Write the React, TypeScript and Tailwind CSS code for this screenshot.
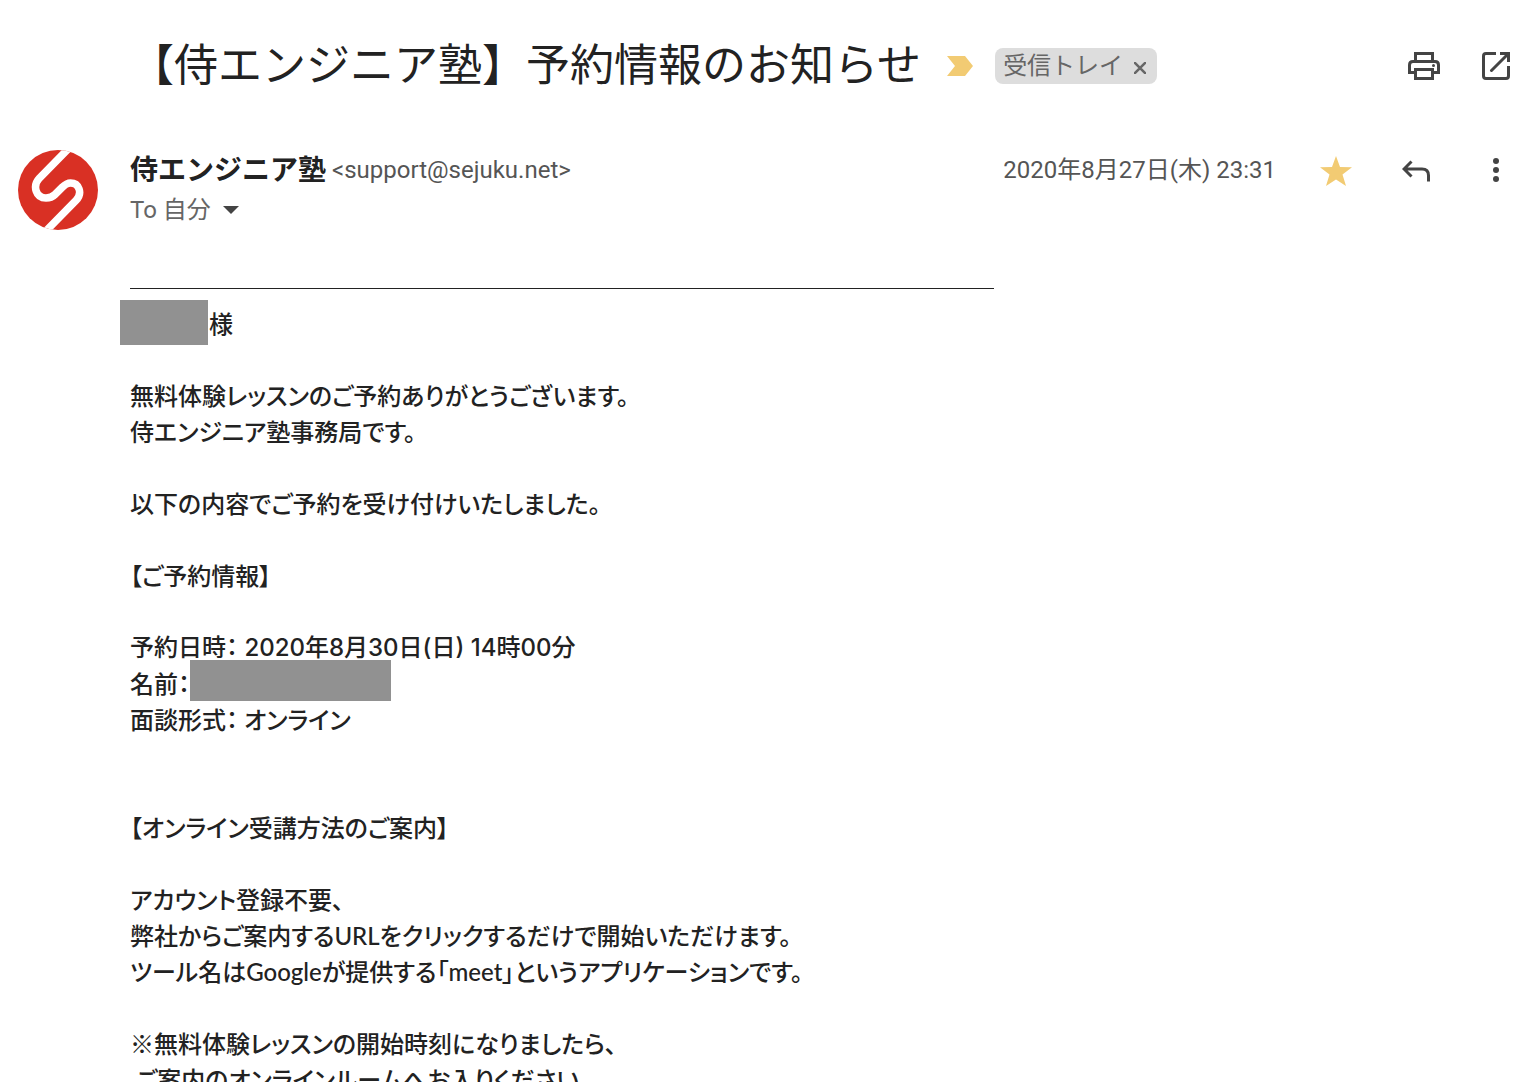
import type { ReactNode } from "react";

const iconButton = "flex size-10 shrink-0 items-center justify-center text-[#444444]";

function Redacted({ className }: { className: string }) {
  return <span aria-hidden="true" className={`shrink-0 bg-[#919191] ${className}`} />;
}

const Logo = () => (
  <svg viewBox="0 0 80 80" className="size-20 shrink-0" role="img" aria-label="侍エンジニア塾">
    <clipPath id="disc">
      <circle cx="40" cy="40" r="40" />
    </clipPath>
    <g clipPath="url(#disc)">
      <rect width="80" height="80" fill="#d93024" />
      <path
        d="M54 -5 L21.500 28 C14 36 18 48 28 48 C32 48 34.500 47 37 44.500 L44 37.500 C46.500 35 49 33 52.500 33 C61 33 65 43 58 50.500 L25 84"
        fill="none"
        stroke="#fff"
        strokeWidth="7.500"
      />
    </g>
  </svg>
);

const PrintIcon = () => (
  <svg viewBox="0 0 32 28" className="h-7 w-8" fill="none" stroke="currentColor" strokeWidth="3">
    <path d="M7.500 9V1.500h17V9M7 20.500H1.500V13q0-3.500 3.500-3.500h22q3.500 0 3.500 3.500v7.500H25" />
    <path d="M7.500 17.500h17v9h-17z" />
    <circle cx="25.500" cy="13.500" r="1.500" fill="currentColor" stroke="none" />
  </svg>
);

const OpenIcon = () => (
  <svg viewBox="0 0 28 28" className="size-7" fill="none" stroke="currentColor" strokeWidth="3">
    <path d="M14 1.500H4Q1.500 1.500 1.500 4v20q0 2.500 2.500 2.500h20q2.500 0 2.500-2.500V14M18 1.500h8.500V10" />
    <path d="M26 2 9.500 18.500" strokeLinecap="round" />
  </svg>
);

const StarIcon = () => (
  <svg viewBox="0 0 32 30" className="mt-[2px] h-[30px] w-8" fill="#f2cb73">
    <path d="M16 0l4 10.900 12 .4-9.500 7.100L26 30l-10-6.500L6 30l3.500-11.600L0 11.300l12-.4z" />
  </svg>
);

const ReplyIcon = () => (
  <svg viewBox="0 0 28 22" className="mt-[2px] h-[22px] w-7" fill="none" stroke="currentColor" strokeWidth="3">
    <path d="M9.500 1.500 2 9l7.500 7.500M2 9h18q6.500 0 6.500 6.500V21.500" />
  </svg>
);

const MoreIcon = () => (
  <svg viewBox="0 0 6 24" className="h-6 w-[6px]" fill="currentColor">
    <circle cx="3" cy="3" r="3" />
    <circle cx="3" cy="12" r="3" />
    <circle cx="3" cy="21" r="3" />
  </svg>
);

const lines: ReactNode[] = [
  <>
    <Redacted className="-mt-[6px] -ml-[10px] mr-px h-[45px] w-[88px]" />様
  </>,
  "",
  "無料体験レッスンのご予約ありがとうございます。",
  "侍エンジニア塾事務局です。",
  "",
  "以下の内容でご予約を受け付けいたしました。",
  "",
  "【ご予約情報】",
  "",
  <span className="font-[Inter,'Noto_Sans_CJK_JP',sans-serif]">予約日時： 2020年8月30日(日) 14時00分</span>,
  <>
    名前：
    <Redacted className="-mt-[6px] h-[41px] w-[201px]" />
  </>,
  "面談形式： オンライン",
  "",
  "",
  "【オンライン受講方法のご案内】",
  "",
  "アカウント登録不要、",
  "弊社からご案内するURLをクリックするだけで開始いただけます。",
  "ツール名はGoogleが提供する「meet」というアプリケーションです。",
  "",
  "※無料体験レッスンの開始時刻になりましたら、",
  " ご案内のオンラインルームへお入りください。",
];

export default function App() {
  return (
    <main className="h-screen overflow-hidden bg-white pl-[18px] font-[Roboto,'Noto_Sans_CJK_JP',sans-serif] text-[#222222]">
      <header className="flex h-[132px] items-center pl-28 pr-[18px]">
        <h1 className="pb-2 font-['Noto_Sans_CJK_JP',sans-serif] text-[44px] leading-[64px] font-normal whitespace-nowrap">
          【侍エンジニア塾】予約情報のお知らせ
        </h1>
        <svg viewBox="0 0 26 20" className="ml-[26px] h-5 w-[26px] shrink-0" fill="#f2cb73" role="img" aria-label="重要">
          <path d="M0 0h18l8 10-8 10H0l8-10z" />
        </svg>
        <div className="ml-[22px] flex h-9 shrink-0 items-center rounded-lg bg-[#dddddd] pl-2 text-2xl text-[#666666]">
          <span className="pb-1 font-['Noto_Sans_CJK_JP',sans-serif] whitespace-nowrap">受信トレイ</span>
          <button aria-label="受信トレイ ラベルを削除" className="flex h-9 w-[34px] items-center justify-center pt-1">
            <svg viewBox="0 0 12 12" className="size-3" stroke="currentColor" strokeWidth="2.500">
              <path d="M0 0l12 12M12 0 0 12" />
            </svg>
          </button>
        </div>
        <div className="ml-auto flex gap-8">
          <button aria-label="印刷" className={iconButton}><PrintIcon /></button>
          <button aria-label="新しいウィンドウで開く" className={iconButton}><OpenIcon /></button>
        </div>
      </header>

      <section className="flex items-start pt-[18px] pr-[18px]">
        <Logo />
        <div className="ml-8">
          <p className="flex h-10 items-center gap-[6px] whitespace-nowrap">
            <b className="pb-1 font-['Noto_Sans_CJK_JP',sans-serif] text-[28px]">侍エンジニア塾</b>
            <span className="text-2xl text-[#555555]">&lt;support@sejuku.net&gt;</span>
          </p>
          <button className="flex h-10 items-center gap-3 text-2xl text-[#666666]">
            To 自分
            <svg viewBox="0 0 16 8" className="h-2 w-4" fill="#444444">
              <path d="M0 0h16l-8 8z" />
            </svg>
          </button>
        </div>
        <div className="ml-auto flex h-10 items-center">
          <time dateTime="2020-08-27T23:31" className="text-2xl whitespace-nowrap text-[#555555]">
            2020年8月27日(木) 23:31
          </time>
          <button aria-label="スター" className={`ml-10 ${iconButton}`}><StarIcon /></button>
          <button aria-label="返信" className={`ml-10 ${iconButton}`}><ReplyIcon /></button>
          <button aria-label="その他" className={`ml-10 ${iconButton}`}><MoreIcon /></button>
        </div>
      </section>

      <article className="ml-28 pt-[58px] font-[Lato,'Noto_Sans_CJK_JP',sans-serif] text-2xl leading-9 font-medium">
        <hr className="mb-[17px] w-[864px] border-[#222222]" />
        {lines.map((line, i) => (
          <p key={i} className="flex h-9 items-start whitespace-pre [font-feature-settings:'palt']">
            {line}
          </p>
        ))}
      </article>
    </main>
  );
}
